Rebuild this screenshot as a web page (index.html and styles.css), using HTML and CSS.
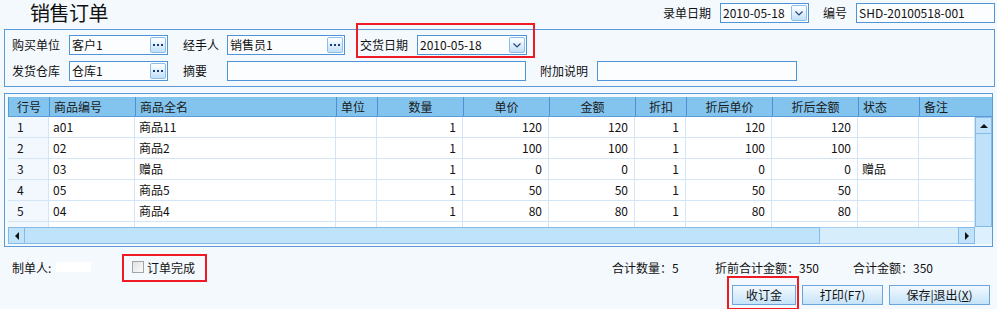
FILE: index.html
```html
<!DOCTYPE html>
<html lang="zh-CN">
<head>
<meta charset="utf-8">
<title>销售订单</title>
<link rel="stylesheet" href="styles.css">
</head>
<body>
<div class="page">
  <header class="topbar">
    <h1 class="title">销售订单</h1>
    <div class="meta">
      <span class="lbl lbl-date">录单日期</span>
      <div class="field w-topdate"><span class="val">2010-05-18</span><span class="fbtn"><svg width="8" height="5" viewBox="0 0 8 5"><polyline points="0.5,0.5 4,4 7.5,0.5" fill="none" stroke="#27457a" stroke-width="1.2"/></svg></span></div>
      <span class="lbl lbl-no">编号</span>
      <div class="field w-no"><span class="val">SHD-20100518-001</span></div>
    </div>
  </header>

  <section class="panel">
    <div class="prow">
      <span class="lbl l57">购买单位</span>
      <div class="field w99"><span class="val">客户1</span><span class="fbtn"><svg width="10" height="2" viewBox="0 0 10 2"><rect x="0" y="0" width="2" height="2" fill="#1d3d78"/><rect x="4" y="0" width="2" height="2" fill="#1d3d78"/><rect x="8" y="0" width="2" height="2" fill="#1d3d78"/></svg></span></div>
      <span class="lbl l44 gap15">经手人</span>
      <div class="field w118"><span class="val">销售员1</span><span class="fbtn"><svg width="10" height="2" viewBox="0 0 10 2"><rect x="0" y="0" width="2" height="2" fill="#1d3d78"/><rect x="4" y="0" width="2" height="2" fill="#1d3d78"/><rect x="8" y="0" width="2" height="2" fill="#1d3d78"/></svg></span></div>
      <div class="hl hl-deliver gap15">
        <span class="lbl l57">交货日期</span>
        <div class="field w110"><span class="val">2010-05-18</span><span class="fbtn"><svg width="8" height="5" viewBox="0 0 8 5"><polyline points="0.5,0.5 4,4 7.5,0.5" fill="none" stroke="#27457a" stroke-width="1.2"/></svg></span></div>
      </div>
    </div>
    <div class="prow">
      <span class="lbl l57">发货仓库</span>
      <div class="field w99"><span class="val">仓库1</span><span class="fbtn"><svg width="10" height="2" viewBox="0 0 10 2"><rect x="0" y="0" width="2" height="2" fill="#1d3d78"/><rect x="4" y="0" width="2" height="2" fill="#1d3d78"/><rect x="8" y="0" width="2" height="2" fill="#1d3d78"/></svg></span></div>
      <span class="lbl l44 gap15">摘要</span>
      <div class="field w299"><span class="val"></span></div>
      <span class="lbl l57 gap14">附加说明</span>
      <div class="field w200"><span class="val"></span></div>
    </div>
  </section>

  <section class="grid-wrap">
    <div class="grid">
      <div class="ghead">
        <div class="hc al">行号</div>
        <div class="hc al">商品编号</div>
        <div class="hc al">商品全名</div>
        <div class="hc al">单位</div>
        <div class="hc">数量</div>
        <div class="hc">单价</div>
        <div class="hc">金额</div>
        <div class="hc">折扣</div>
        <div class="hc">折后单价</div>
        <div class="hc">折后金额</div>
        <div class="hc al">状态</div>
        <div class="hc al last">备注</div>
      </div>
      <div class="gmid">
        <div class="gbody">
          <div class="grow"><div class="c no">1</div><div class="c">a01</div><div class="c">商品11</div><div class="c"></div><div class="c r">1</div><div class="c r">120</div><div class="c r">120</div><div class="c r">1</div><div class="c r">120</div><div class="c r">120</div><div class="c"></div><div class="c"></div></div>
          <div class="grow"><div class="c no">2</div><div class="c">02</div><div class="c">商品2</div><div class="c"></div><div class="c r">1</div><div class="c r">100</div><div class="c r">100</div><div class="c r">1</div><div class="c r">100</div><div class="c r">100</div><div class="c"></div><div class="c"></div></div>
          <div class="grow"><div class="c no">3</div><div class="c">03</div><div class="c">赠品</div><div class="c"></div><div class="c r">1</div><div class="c r">0</div><div class="c r">0</div><div class="c r">1</div><div class="c r">0</div><div class="c r">0</div><div class="c">赠品</div><div class="c"></div></div>
          <div class="grow"><div class="c no">4</div><div class="c">05</div><div class="c">商品5</div><div class="c"></div><div class="c r">1</div><div class="c r">50</div><div class="c r">50</div><div class="c r">1</div><div class="c r">50</div><div class="c r">50</div><div class="c"></div><div class="c"></div></div>
          <div class="grow"><div class="c no">5</div><div class="c">04</div><div class="c">商品4</div><div class="c"></div><div class="c r">1</div><div class="c r">80</div><div class="c r">80</div><div class="c r">1</div><div class="c r">80</div><div class="c r">80</div><div class="c"></div><div class="c"></div></div>
          <div class="grow"><div class="c no"></div><div class="c"></div><div class="c"></div><div class="c"></div><div class="c"></div><div class="c"></div><div class="c"></div><div class="c"></div><div class="c"></div><div class="c"></div><div class="c"></div><div class="c"></div></div>
        </div>
        <div class="vscroll">
          <div class="sbtn"><span class="tri tri-up"></span></div>
          <div class="vthumb"></div>
        </div>
      </div>
      <div class="gfoot">
        <div class="hscroll">
          <div class="sbtn"><span class="tri tri-left"></span></div>
          <div class="hthumb"></div>
          <div class="htrack"></div>
          <div class="sbtn"><span class="tri tri-right"></span></div>
        </div>
        <div class="corner"></div>
      </div>
    </div>
  </section>

  <section class="info">
    <span class="maker-lbl">制单人:</span>
    <span class="maker-name"></span>
    <label class="hl hl-done done">
      <span class="check"></span>
      <span>订单完成</span>
    </label>
    <div class="totals">
      <span class="tot t1">合计数量：5</span>
      <span class="tot t2">折前合计金额：350</span>
      <span class="tot t3">合计金额：350</span>
    </div>
  </section>

  <section class="actions">
    <button class="btn b-deposit hl hl-btn">收订金</button>
    <button class="btn b-print">打印(F7)</button>
    <button class="btn b-save">保存|退出(<u>X</u>)</button>
  </section>
</div>
</body>
</html>
```

FILE: styles.css
```css
* { box-sizing: border-box; }
html, body { margin: 0; padding: 0; }
body {
  background: #f4f9fe;
  font-family: "Noto Sans CJK SC", "Liberation Sans", sans-serif;
  font-size: 12px;
  color: #111;
  width: 997px;
  height: 309px;
  overflow: hidden;
}
.page { width: 997px; }

/* top bar */
.topbar { display: flex; height: 26px; padding: 0 2px 0 30px; }
.title {
  margin: 0;
  font-size: 20px;
  font-weight: normal;
  line-height: 26px;
  height: 26px;
  letter-spacing: -0.5px;
  color: #111;
  white-space: nowrap;
}
.meta { display: flex; align-items: center; margin-left: auto; margin-top: 3px; height: 20px; }
.lbl { white-space: nowrap; line-height: 20px; flex: none; }
.lbl-date { width: 57px; }
.lbl-no { width: 33px; margin-left: 14px; }

/* fields */
.field {
  display: flex;
  align-items: center;
  height: 20px;
  border: 1px solid #4f93d8;
  background: #fbfdff;
  padding-left: 2px;
  flex: none;
}
.val { flex: 1; white-space: nowrap; overflow: hidden; line-height: 18px; }
.fbtn {
  width: 16px;
  height: 16px;
  margin: 1px;
  border: 1px solid #8dbde9;
  border-radius: 2px;
  background: linear-gradient(#ffffff, #c2e0f8);
  display: flex;
  align-items: center;
  justify-content: center;
  flex: none;
}
.w-topdate { width: 89px; }
.w-no { width: 139px; }
.w99 { width: 99px; }
.w118 { width: 118px; }
.w110 { width: 110px; }
.w299 { width: 299px; }
.w200 { width: 200px; }
.l57 { width: 57px; }
.l44 { width: 44px; }
.gap15 { margin-left: 15px; }
.gap14 { margin-left: 14px; }

/* panel */
.panel {
  margin: 3px 0 0 4px;
  width: 991px;
  height: 58px;
  border: 1px solid #5b9ad6;
  padding: 5px 0 0 7px;
  display: flex;
  flex-direction: column;
  gap: 6px;
}
.prow { display: flex; align-items: center; height: 20px; }

/* red highlight annotations */
.hl { position: relative; }
.hl::after {
  content: "";
  position: absolute;
  border: 2px solid #ee1b24;
  pointer-events: none;
}
.hl-deliver { display: flex; align-items: center; }
.hl-deliver::after { top: -12px; bottom: -3px; left: -4px; right: -8px; }
.hl-done::after { top: -5px; bottom: -6px; left: -10px; right: -12px; }
.hl-btn::after { top: -10px; bottom: -6px; left: -6px; right: -4px; }

/* grid */
.grid-wrap {
  margin: 6px 0 0 4px;
  width: 989px;
  height: 154px;
  border: 1px solid #5b9ad6;
  padding: 3px 0 0 3px;
}
.grid { width: 984px; }
.ghead {
  display: grid;
  grid-template-columns: 41px 86px 201px 41px 86px 86px 86px 51px 86px 86px 61px 73px;
  height: 20px;
  background: #82c4ee;
  border-bottom: 1px solid #5b9bd8;
  border-left: 1px solid #5b9bd8;
}
.hc {
  line-height: 19px;
  text-align: center;
  border-right: 1px solid #4f8fd2;
  color: #1a1a1a;
  white-space: nowrap;
}
.hc.al { text-align: left; padding-left: 4px; }
.hc:first-child { padding-left: 8px; }
.hc.last { border-right: none; }

.gmid { display: flex; height: 110px; }
.gbody { width: 967px; height: 110px; overflow: hidden; background: #fff; }
.grow {
  display: grid;
  grid-template-columns: 41px 86px 201px 41px 86px 86px 86px 51px 86px 86px 61px 56px;
  height: 21px;
}
.c {
  line-height: 20px;
  border-right: 1px solid #d3e6f8;
  border-bottom: 1px solid #d3e6f8;
  padding: 0 4px;
  white-space: nowrap;
  overflow: hidden;
  color: #111;
}
.c.r { text-align: right; padding-right: 6px; }
.c.no { background: #f2f8fe; padding-left: 9px; }

.vscroll {
  width: 17px;
  height: 110px;
  display: flex;
  flex-direction: column;
  background: #d9eefc;
}
.sbtn {
  width: 17px;
  height: 17px;
  flex: none;
  border: 1px solid #86bbe8;
  background: #c0e2fa;
  display: flex;
  align-items: center;
  justify-content: center;
}
.vthumb { flex: 1; border: 1px solid #86bbe8; border-top: none; background: #bfe2fa; }

.gfoot { display: flex; height: 17px; }
.hscroll { display: flex; width: 967px; height: 17px; }
.hthumb { width: 795px; border: 1px solid #86bbe8; border-left: none; background: #bfe3fb; }
.htrack { flex: 1; background: #d6edfc; border-top: 1px solid #a9d2f2; border-bottom: 1px solid #a9d2f2; }
.corner { width: 17px; background: #dcf0fd; }

.tri { width: 0; height: 0; display: block; }
.tri-up { border-left: 4px solid transparent; border-right: 4px solid transparent; border-bottom: 4px solid #111; }
.tri-left { border-top: 4px solid transparent; border-bottom: 4px solid transparent; border-right: 4px solid #111; }
.tri-right { border-top: 4px solid transparent; border-bottom: 4px solid transparent; border-left: 4px solid #111; }

/* info row */
.info {
  display: flex;
  align-items: center;
  height: 18px;
  margin-top: 11px;
  padding-left: 12px;
}
.maker-lbl { width: 44px; white-space: nowrap; }
.maker-name { width: 35px; height: 10px; background: #fff; }
.done {
  display: flex;
  align-items: center;
  margin-left: 41px;
  gap: 3px;
  white-space: nowrap;
}
.check {
  width: 12px;
  height: 12px;
  border: 1px solid #a4a4a4;
  background: linear-gradient(135deg, #e2e2e2, #fbfbfb);
}
.totals { display: flex; margin-left: auto; width: 385px; white-space: nowrap; }
.t1 { width: 103px; }
.t2 { width: 138px; }

/* actions */
.actions {
  display: flex;
  justify-content: flex-end;
  gap: 6px;
  margin-top: 9px;
  padding-right: 7px;
}
.btn {
  height: 20px;
  padding: 0;
  font-family: inherit;
  font-size: 12px;
  line-height: 18px;
  color: #111;
  border: 1px solid #6aa6dc;
  background: linear-gradient(#f2f9ff, #c6e3f8);
  white-space: nowrap;
}
.b-deposit { width: 64px; }
.b-print { width: 81px; }
.b-save { width: 101px; }
```
